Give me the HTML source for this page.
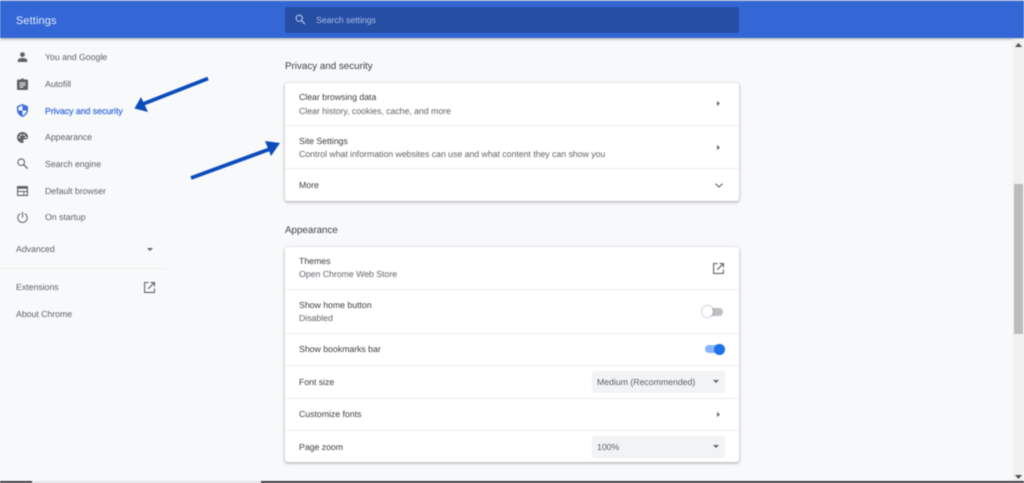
<!DOCTYPE html>
<html><head><meta charset="utf-8"><style>
html,body{margin:0;padding:0;width:1024px;height:483px;overflow:hidden;background:#f8f9fa;font-family:"Liberation Sans",sans-serif}
#r{position:absolute;left:0;top:0;width:1024px;height:483px;overflow:hidden;filter:blur(.4px);text-rendering:geometricPrecision}
.t{position:absolute;white-space:nowrap;font-size:8.8px;line-height:12px;color:#5f6368;letter-spacing:-.05px}
.d{color:#3c4043}
.h{font-size:9.8px;letter-spacing:0}
.b{position:absolute;background:#ececed;height:1px}
.card{position:absolute;left:285px;width:454px;background:#fff;border-radius:3px;box-shadow:0 1px 2px rgba(60,64,67,.3),0 1px 3px 1px rgba(60,64,67,.13)}
.sel{position:absolute;left:592px;width:133px;height:22px;background:#f1f3f4;border-radius:3px}
svg{position:absolute;overflow:visible}
</style></head><body><div id="r">
<div style="position:absolute;left:0;top:0;width:1024px;height:37px;background:#3367d6;border-top:1px solid #a9b7d6;box-sizing:content-box;box-shadow:0 1px 3px rgba(60,64,67,.45)"></div>
<div class="t" style="left:16px;top:14px;font-size:11px;line-height:14px;color:#e4ecfb;letter-spacing:.1px">Settings</div>
<div style="position:absolute;left:285px;top:7px;width:454px;height:26px;background:#264ea3;border-radius:2px"></div>
<svg style="left:295px;top:14px" width="11" height="11" viewBox="0 0 12 12"><circle cx="4.6" cy="4.6" r="3.4" fill="none" stroke="#c3d0ec" stroke-width="1.1"/><path d="M7.2 7.2L11 11" stroke="#c3d0ec" stroke-width="1.2"/></svg>
<div class="t" style="left:316px;top:14px;color:#a9bce6">Search settings</div>

<svg style="left:17px;top:52px" width="11" height="10" viewBox="0 0 11 10"><circle cx="5.5" cy="2.6" r="2.4" fill="#5f6368"/><path d="M.8 10V8.400C.8 6.700 3.600 6 5.500 6s4.700.7 4.700 2.400V10z" fill="#5f6368"/></svg>
<div class="t" style="left:45px;top:51px">You and Google</div>
<svg style="left:17px;top:78px" width="11" height="12" viewBox="0 0 11 12"><path d="M1 1.500h2.800L5.500 0l1.700 1.500H10a1 1 0 0 1 1 1V11a1 1 0 0 1-1 1H1a1 1 0 0 1-1-1V2.500a1 1 0 0 1 1-1z" fill="#5f6368"/><path d="M2.500 5h6M2.500 7h6M2.500 9h4" stroke="#f8f9fa" stroke-width=".9"/></svg>
<div class="t" style="left:45px;top:78px">Autofill</div>
<svg style="left:17px;top:104px" width="11" height="13" viewBox="0 0 11 13"><path d="M5.500 0L0 2.300v3.600C0 9.100 2.400 12 5.500 13c3.100-1 5.500-3.900 5.500-7.100V2.300z" fill="#3f6fdc"/><path d="M5.500 1.500V6.500H1.400C1.600 4 1.500 3.200 1.500 3.200zM5.500 6.500h4c-.4 2.400-2 4.200-4 5z" fill="#f8f9fa"/></svg>
<div class="t" style="left:45px;top:105px;color:#3f6fdc;-webkit-text-stroke:.25px #3f6fdc">Privacy and security</div>
<svg style="left:17px;top:132px" width="11" height="11" viewBox="0 0 11 11"><path d="M5.500 0C2.500 0 0 2.400 0 5.500S2.500 11 5.500 11c.8 0 1.200-.6 1.200-1.100 0-.8-.6-.9-.6-1.500 0-.6.500-1 1.100-1H8.500C10 7.400 11 6.300 11 5 11 2.200 8.500 0 5.500 0z" fill="#5f6368"/><circle cx="2.400" cy="5.300" r=".9" fill="#f8f9fa"/><circle cx="4" cy="3" r=".9" fill="#f8f9fa"/><circle cx="7" cy="3" r=".9" fill="#f8f9fa"/><circle cx="8.700" cy="5.300" r=".9" fill="#f8f9fa"/></svg>
<div class="t" style="left:45px;top:131px">Appearance</div>
<svg style="left:17px;top:158px" width="11" height="11" viewBox="0 0 11 11"><circle cx="4.200" cy="4.200" r="3.300" fill="none" stroke="#5f6368" stroke-width="1.100"/><path d="M6.700 6.700L10.700 10.700" stroke="#5f6368" stroke-width="1.300"/></svg>
<div class="t" style="left:45px;top:158px">Search engine</div>
<svg style="left:17px;top:186px" width="11" height="10" viewBox="0 0 11 10"><path d="M.6.600h9.800v8.800H.6z" fill="none" stroke="#5f6368" stroke-width="1.100"/><path d="M0 0h11v2.800H0z" fill="#5f6368"/><path d="M.6 5.500h9.800M6.800 5.500v3.800" stroke="#5f6368" stroke-width=".9"/></svg>
<div class="t" style="left:45px;top:185px">Default browser</div>
<svg style="left:17px;top:212px" width="11" height="11" viewBox="0 0 11 11"><path d="M5.500 0v5.600" stroke="#5f6368" stroke-width="1.100"/><path d="M3.200 1.700A4.700 4.700 0 1 0 7.800 1.700" fill="none" stroke="#5f6368" stroke-width="1"/></svg>
<div class="t" style="left:45px;top:211px">On startup</div>
<div class="t" style="left:16px;top:243px">Advanced</div>
<svg style="left:147px;top:248px" width="6" height="3" viewBox="0 0 6 3"><path d="M0 0h6L3 3z" fill="#5f6368"/></svg>
<div class="b" style="left:0;top:268px;width:167px"></div>
<div class="t" style="left:16px;top:281px">Extensions</div>
<svg style="left:144px;top:282px" width="11" height="11" viewBox="0 0 11 11"><path d="M4.500.6H.6v9.800h9.800V6.500" fill="none" stroke="#5f6368" stroke-width="1.100"/><path d="M6.500 0H11v4.500H9.900V1.900L4.600 7.200 3.800 6.400 9.100 1.100H6.500z" fill="#5f6368"/></svg>
<div class="t" style="left:16px;top:308px">About Chrome</div>

<div class="t d h" style="left:285px;top:61px">Privacy and security</div>
<div class="card" style="top:83px;height:118px"></div>
<div class="t d" style="left:299px;top:91px">Clear browsing data</div>
<div class="t" style="left:299px;top:105px">Clear history, cookies, cache, and more</div>
<svg style="left:717px;top:101px" width="3" height="5" viewBox="0 0 3 5"><path d="M0 0l3 2.500L0 5z" fill="#5f6368"/></svg>
<div class="b" style="left:285px;top:125px;width:454px"></div>
<div class="t d" style="left:299px;top:135px">Site Settings</div>
<div class="t" style="left:299px;top:148px">Control what information websites can use and what content they can show you</div>
<svg style="left:717px;top:145px" width="3" height="5" viewBox="0 0 3 5"><path d="M0 0l3 2.500L0 5z" fill="#5f6368"/></svg>
<div class="b" style="left:285px;top:168px;width:454px"></div>
<div class="t d" style="left:299px;top:179px">More</div>
<svg style="left:715px;top:183px" width="8" height="5" viewBox="0 0 8 5"><path d="M.5.700L4 4 7.500.700" fill="none" stroke="#5f6368" stroke-width="1.100"/></svg>

<div class="t d h" style="left:285px;top:225px">Appearance</div>
<div class="card" style="top:247px;height:215px"></div>
<div class="t d" style="left:299px;top:255px">Themes</div>
<div class="t" style="left:299px;top:268px">Open Chrome Web Store</div>
<svg style="left:713px;top:263px" width="11" height="11" viewBox="0 0 11 11"><path d="M4.500.6H.6v9.800h9.800V6.500" fill="none" stroke="#5f6368" stroke-width="1.100"/><path d="M6.500 0H11v4.500H9.900V1.900L4.600 7.200 3.800 6.400 9.100 1.100H6.500z" fill="#5f6368"/></svg>
<div class="b" style="left:285px;top:289px;width:454px"></div>
<div class="t d" style="left:299px;top:299px">Show home button</div>
<div class="t" style="left:299px;top:312px">Disabled</div>
<div style="position:absolute;left:705px;top:308px;width:18px;height:8px;border-radius:4px;background:#bdc1c6"></div>
<div style="position:absolute;left:702px;top:306px;width:11px;height:11px;border-radius:50%;background:#fff;box-shadow:0 0 2px rgba(0,0,0,.45)"></div>
<div class="b" style="left:285px;top:333px;width:454px"></div>
<div class="t d" style="left:299px;top:343px">Show bookmarks bar</div>
<div style="position:absolute;left:705px;top:345px;width:18px;height:8px;border-radius:4px;background:#8ab4f8"></div>
<div style="position:absolute;left:714px;top:344px;width:11px;height:11px;border-radius:50%;background:#1a73e8;box-shadow:0 0 1px rgba(0,0,0,.3)"></div>
<div class="b" style="left:285px;top:365px;width:454px"></div>
<div class="t d" style="left:299px;top:376px">Font size</div>
<div class="sel" style="top:371px"></div>
<div class="t" style="left:597px;top:376px">Medium (Recommended)</div>
<svg style="left:713px;top:380px" width="6" height="3" viewBox="0 0 6 3"><path d="M0 0h6L3 3z" fill="#5f6368"/></svg>
<div class="b" style="left:285px;top:398px;width:454px"></div>
<div class="t d" style="left:299px;top:408px">Customize fonts</div>
<svg style="left:717px;top:412px" width="3" height="5" viewBox="0 0 3 5"><path d="M0 0l3 2.500L0 5z" fill="#5f6368"/></svg>
<div class="b" style="left:285px;top:430px;width:454px"></div>
<div class="t d" style="left:299px;top:441px">Page zoom</div>
<div class="sel" style="top:436px"></div>
<div class="t" style="left:597px;top:441px">100%</div>
<svg style="left:713px;top:445px" width="6" height="3" viewBox="0 0 6 3"><path d="M0 0h6L3 3z" fill="#5f6368"/></svg>

<div style="position:absolute;left:1013px;top:39px;width:11px;height:444px;background:#f1f1f1"></div>
<div style="position:absolute;left:1014px;top:184px;width:9px;height:150px;background:#bcbcbc"></div>
<svg style="left:1015px;top:43px" width="7" height="4" viewBox="0 0 7 4"><path d="M0 4L3.500 0 7 4z" fill="#505050"/></svg>
<svg style="left:1015px;top:475px" width="7" height="4" viewBox="0 0 7 4"><path d="M0 0L3.500 4 7 0z" fill="#505050"/></svg>

<div style="position:absolute;left:0;top:481px;width:1024px;height:2px;background:#3a3a3c"></div>
<div style="position:absolute;left:32px;top:481px;width:229px;height:2px;background:#e4e5e7"></div>

<svg style="left:0;top:0" width="1024" height="483" viewBox="0 0 1024 483">
<path d="M208 78.500L143 104" stroke="#0b4cbb" stroke-width="3.800"/>
<path d="M134.500 108.500L141 97 148 112z" fill="#0b4cbb"/>
<path d="M191 178L270 149" stroke="#0b4cbb" stroke-width="3.800"/>
<path d="M280 143L265 141 271 156z" fill="#0b4cbb"/>
</svg>
</div></body></html>
